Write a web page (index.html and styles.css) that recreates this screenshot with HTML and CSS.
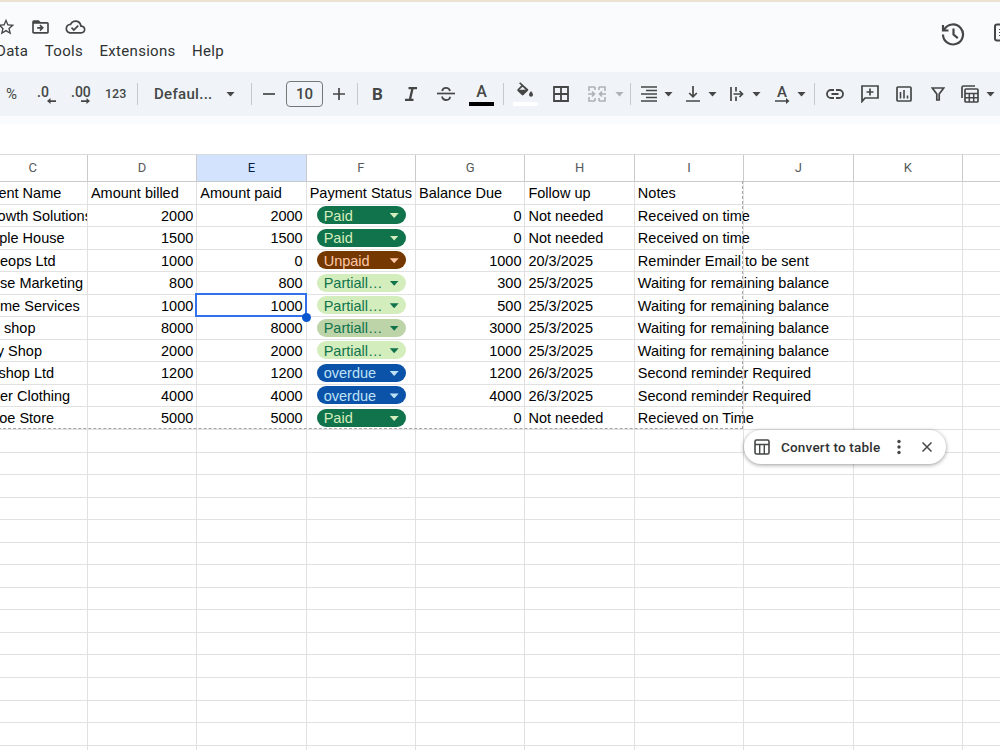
FILE: index.html
```html
<!DOCTYPE html>
<html lang="en">
<head>
  <meta charset="UTF-8">
  <meta name="viewport" content="width=device-width, initial-scale=1.0">
  <title>Payments - Sheet</title>
  <link rel="stylesheet" href="styles.css">
</head>
<body>
  <header class="top">
    <div>
      <div class="doc-icons">
        <svg width="20" height="20" viewBox="0 0 24 24"><path d="M22 9.24l-7.19-.62L12 2 9.19 8.63 2 9.24l5.46 4.73L5.82 21 12 17.27 18.18 21l-1.63-7.03L22 9.24zM12 15.4l-3.76 2.27 1-4.28-3.32-2.88 4.38-.38L12 6.1l1.71 4.04 4.38.38-3.32 2.88 1 4.28L12 15.4z"/></svg>
        <svg width="21" height="20" viewBox="0 0 24 24"><path d="M20 6h-8l-2-2H4a2 2 0 0 0-2 2v12c0 1.1.9 2 2 2h16c1.100 0 2-.9 2-2V8c0-1.100-.9-2-2-2zm0 12H4V8h16v10zm-8-1l4-4-4-4-1.300 1.300L12.200 12H8v2h4.200l-1.500 1.700z"/></svg>
        <svg width="21" height="20" viewBox="0 0 24 24"><path d="M19.350 10.040A7.490 7.490 0 0 0 12 4C9.110 4 6.600 5.640 5.350 8.040A5.994 5.994 0 0 0 0 14c0 3.310 2.690 6 6 6h13c2.760 0 5-2.240 5-5 0-2.640-2.050-4.780-4.650-4.960zM19 18H6c-2.210 0-4-1.790-4-4 0-2.050 1.530-3.760 3.560-3.970l1.070-.110.500-.950A5.469 5.469 0 0 1 12 6c2.620 0 4.880 1.860 5.390 4.430l.300 1.500 1.530.110A2.980 2.980 0 0 1 22 15c0 1.650-1.350 3-3 3zm-9-3.820l-2.090-2.090L6.500 13.500 10 17l6.010-6.010-1.410-1.410z"/></svg>
      </div>
      <nav class="menu">
        <span>Data</span><span>Tools</span><span>Extensions</span><span>Help</span>
      </nav>
    </div>
    <div class="top-actions">
      <svg width="24" height="24" viewBox="0 0 24 24" class="line"><path d="M3.300 7.500A10 10 0 1 1 2 12.500M2 3v5.500h5.500M12.500 6.500v6l4.300 3.600" stroke-width="2.200"/></svg>
      <svg width="20" height="20" viewBox="0 0 20 20" class="line"><rect x="1" y="2.500" width="18" height="16" rx="2" stroke-width="2"/><path d="M5 7.500h9M5 10.500h9M5 13.500h9" stroke-width="1.200"/></svg>
    </div>
  </header>

  <div class="toolbar">
    <span class="tool percent">%</span>
    <span class="tool decimal">.0<svg width="9" height="6" viewBox="0 0 9 6"><path d="M9 2.200H3.500V0L0 3l3.500 3V3.900H9z"/></svg></span>
    <span class="tool decimal">.00<svg width="9" height="6" viewBox="0 0 9 6"><path d="M0 2.200h5.500V0L9 3 5.500 6V3.900H0z"/></svg></span>
    <span class="tool number">123</span>
    <i class="sep"></i>
    <span class="tool font">Defaul...</span>
    <i class="caret"></i>
    <i class="sep s-font"></i>
    <svg class="t-minus line" width="12" height="12" viewBox="0 0 12 12"><path d="M0 6h12" stroke-width="1.700"/></svg>
    <span class="size">10</span>
    <svg class="line" width="12" height="12" viewBox="0 0 12 12"><path d="M0 6h12M6 0v12" stroke-width="1.700"/></svg>
    <i class="sep s-size"></i>
    <b class="tool bold">B</b>
    <svg width="12" height="14" viewBox="0 0 12 14"><path d="M3.500 0v2.200h2.600L3.900 11.800H0V14h8.500v-2.200H6.300L8.500 2.200H12V0z"/></svg>
    <svg class="t-strike line" width="18" height="14" viewBox="0 0 18 14"><path d="M0 6.500h18" stroke-width="1.700"/><path d="M13 4C12.500 1.800 11 .9 9 .9S5.500 2 5.200 4M5 9.500c.5 2.300 2 3.500 4.200 3.500s3.800-1.200 3.800-3.200" stroke-width="1.800"/></svg>
    <span class="tool color">A</span>
    <i class="sep s-color"></i>
    <span class="tool fill"><svg width="17" height="16" viewBox="0 0 17 16"><path d="M3.200.2L2.100 1.300l2.200 2.200L.6 7.200c-.5.5-.5 1.200 0 1.700l4.200 4.200c.5.5 1.200.5 1.700 0l4.600-4.600c.3-.3.300-.9 0-1.200zM5.500 4.700l3.200 3.100H2.300zM14 9s-2 2.300-2 3.700a2 2 0 0 0 4 0C16 11.300 14 9 14 9z"/></svg></span>
    <svg class="line" width="16" height="16" viewBox="0 0 16 16"><path d="M1 1h14v14H1zM8 1v14M1 8h14" stroke-width="1.800"/></svg>
    <svg class="t-merge line" width="18" height="16" viewBox="0 0 18 16"><path d="M7 1H1v4M1 11v4h6M11 1h6v4M17 11v4h-6M7 1v3M7 15v-3M11 1v3M11 15v-3M0 8h6M4 5.500L6.500 8 4 10.500M18 8h-6M14 5.500L11.500 8l2.500 2.500" stroke-width="1.600"/></svg>
    <i class="caret c-merge"></i>
    <i class="sep s-merge"></i>
    <svg class="t-align line" width="16" height="16" viewBox="0 0 16 16"><path d="M0 1h16M5 4.500h11M0 8h16M5 11.500h11M0 15h16" stroke-width="1.700"/></svg>
    <i class="caret"></i>
    <svg class="t-valign line" width="14" height="16" viewBox="0 0 14 16"><path d="M0 15h14M7 0v10M3.200 7L7 10.800 10.800 7" stroke-width="1.700"/></svg>
    <i class="caret"></i>
    <svg class="t-wrap line" width="14" height="14" viewBox="0 0 14 14"><path d="M1 0v14M6 0v4.500M6 9.500V14M3.500 7h9M9.500 4l3 3-3 3" stroke-width="1.700"/></svg>
    <i class="caret"></i>
    <span class="tool rotate">A<svg width="15" height="6" viewBox="0 0 15 6"><path d="M0 2.200h11V0l3.500 3L11 6V3.800H0z"/></svg></span>
    <i class="caret"></i>
    <i class="sep s-rotate"></i>
    <svg class="line" width="18" height="10" viewBox="0 0 18 10"><path d="M8 1H5a4 4 0 0 0 0 8h3M10 1h3a4 4 0 0 1 0 8h-3M5.500 5h7" stroke-width="1.800"/></svg>
    <svg class="t-comment line" width="18" height="18" viewBox="0 0 18 18"><path d="M1 16.500V1h16v12H4zM9 3.500v7M5.500 7h7" stroke-width="1.700"/></svg>
    <svg class="line" width="16" height="16" viewBox="0 0 16 16"><rect x="1" y="1" width="14" height="14" rx="1" stroke-width="1.700"/><path d="M4.500 6v6.500M8 4v8.500M11.500 9.500v3" stroke-width="1.600"/></svg>
    <svg class="t-filter line" width="14" height="14" viewBox="0 0 14 14"><path d="M1.300 1h11.400L8.200 7v6H5.800V7z" stroke-width="1.700"/></svg>
    <svg class="t-views line" width="18" height="18" viewBox="0 0 18 18"><path d="M1 13V2.500Q1 1 2.500 1H14" stroke-width="1.700"/><rect x="4" y="4" width="13" height="13" rx="1" stroke-width="1.700"/><path d="M4 8.500h13M4 12.700h13M8.300 8.500V17M12.700 8.500V17" stroke-width="1.500"/></svg>
    <i class="caret"></i>
  </div>

  <main class="sheet">
    <div class="grid" id="grid"></div>
    <div class="print-area"></div>
    <div class="convert">
      <svg class="line" width="16" height="16" viewBox="0 0 16 16"><rect x="1" y="1" width="14" height="14" rx="1.500" stroke-width="1.600"/><path d="M1 5.500h14M5.700 5.500V15M10.300 5.500V15" stroke-width="1.400"/></svg>
      <span>Convert to table</span>
      <svg class="dots" width="4" height="16" viewBox="0 0 4 16"><circle cx="2" cy="2.500" r="1.700"/><circle cx="2" cy="8" r="1.700"/><circle cx="2" cy="13.500" r="1.700"/></svg>
      <svg class="line" width="10" height="10" viewBox="0 0 10 10"><path d="M.5.5l9 9M9.500.5l-9 9" stroke-width="1.500"/></svg>
    </div>
  </main>

  <script>
    const columns = ["C", "D", "E", "F", "G", "H", "I", "J", "K", ""];
    const ROWS = 26;

    const rows = [
      ["Client Name", "Amount billed", "Amount paid", "Payment Status", "Balance Due", "Follow up", "Notes"],
      ["Growth Solutions", 2000, 2000, "Paid", 0, "Not needed", "Received on time"],
      ["Apple House", 1500, 1500, "Paid", 0, "Not needed", "Received on time"],
      ["Coeops Ltd", 1000, 0, "Unpaid", 1000, "20/3/2025", "Reminder Email to be sent"],
      ["Rose Marketing", 800, 800, "Partiall…", 300, "25/3/2025", "Waiting for remaining balance"],
      ["Home Services", 1000, 1000, "Partiall…", 500, "25/3/2025", "Waiting for remaining balance"],
      ["TV shop", 8000, 8000, "Partiall…", 3000, "25/3/2025", "Waiting for remaining balance"],
      ["Toy Shop", 2000, 2000, "Partiall…", 1000, "25/3/2025", "Waiting for remaining balance"],
      ["Ecshop Ltd", 1200, 1200, "overdue", 1200, "26/3/2025", "Second reminder Required"],
      ["Over Clothing", 4000, 4000, "overdue", 4000, "26/3/2025", "Second reminder Required"],
      ["Shoe Store", 5000, 5000, "Paid", 0, "Not needed", "Recieved on Time"]
    ];

    const chipClass = { "Paid": "paid", "Unpaid": "unpaid", "Partiall…": "partial", "overdue": "overdue" };
    const grid = document.getElementById("grid");

    function addCell(className, text) {
      const cell = document.createElement("div");
      cell.className = className;
      cell.textContent = text;
      grid.appendChild(cell);
      return cell;
    }

    columns.forEach(name => addCell(name === "E" ? "head active" : "head", name));

    for (let r = 0; r < ROWS; r++) {
      columns.forEach((name, c) => {
        const value = rows[r] && rows[r][c] !== undefined ? rows[r][c] : "";
        const cell = addCell("cell", "");
        if (r > 0 && name === "F" && value) {
          const chip = document.createElement("span");
          chip.className = "chip " + chipClass[value] + (r === 6 ? " hovered" : "");
          chip.textContent = value;
          cell.appendChild(chip);
        } else {
          cell.textContent = value;
        }
        if (typeof value === "number") cell.classList.add("num");
        if (name === "C") cell.classList.add("clip");
        if (name === "E" && r === 5) cell.classList.add("selected");
      });
    }
  </script>
</body>
</html>
```

FILE: styles.css
```css
* {
  box-sizing: border-box;
}
body {
  margin: 0;
  width: 1000px;
  height: 750px;
  overflow: hidden;
  background: #f9fbfd;
  color: #444746;
  font-family: Roboto, Arial, sans-serif;
  border-top: 2px solid #eee3d3;
}
svg {
  display: block;
  flex: none;
  fill: #444746;
}
.line {
  fill: none;
  stroke: #444746;
}
.top {
  display: flex;
  justify-content: space-between;
  height: 70px;
}
.doc-icons {
  display: flex;
  gap: 14px;
  margin-left: -4px;
  padding-top: 15px;
}
.menu {
  display: flex;
  gap: 16.5px;
  margin-left: -4px;
  padding-top: 5px;
  font-size: 15px;
  line-height: 19px;
  letter-spacing: 0.3px;
  color: #303232;
}
.top-actions {
  display: flex;
  gap: 29px;
  width: 59px;
  padding-top: 20px;
}

/* toolbar */
.toolbar {
  display: flex;
  align-items: center;
  height: 44px;
  padding-left: 6px;
  background: #f0f4f9;
  font-weight: 500;
}
.tool {
  flex: none;
  line-height: 20px;
}
.percent {
  width: 31px;
  font-size: 15px;
  font-weight: 400;
}
.decimal {
  position: relative;
  width: 34px;
  padding-bottom: 4px;
  font-size: 14px;
}
.decimal svg {
  position: absolute;
  left: 10px;
  top: 16px;
}
.number {
  width: 32px;
  font-size: 12.5px;
}
.sep {
  flex: none;
  width: 1px;
  height: 22px;
  background: #c7cacd;
}
.font {
  width: 72px;
  margin-left: 16px;
  font-size: 15px;
  letter-spacing: 0.3px;
}
.caret {
  flex: none;
  width: 9px;
  height: 5px;
  background: #444746;
  clip-path: polygon(0 0, 100% 0, 50% 100%);
}
.s-font { margin-left: 16px; }
.t-minus { margin-left: 11px; }
.size {
  width: 37px;
  height: 26px;
  margin: 0 10px 0 11px;
  border: 1px solid #747775;
  border-radius: 4px;
  font-size: 15px;
  line-height: 25px;
  text-align: center;
}
.s-size { margin-left: 12px; }
.bold {
  width: 11px;
  margin: 0 22px 0 14px;
  font-size: 17px;
}
.t-strike { margin: 0 14px 0 20px; }
.color {
  width: 25px;
  height: 24px;
  border-bottom: 4px solid #000;
  font-size: 16px;
  text-align: center;
}
.s-color { margin-left: 9px; }
.fill {
  width: 25px;
  height: 24px;
  margin: 0 15px 0 9px;
  padding-left: 4px;
  border-bottom: 4px solid #fff;
}
.t-merge { margin-left: 19px; opacity: 0.38; }
.c-merge { margin-left: 9px; opacity: 0.38; }
.s-merge { margin: 0 10px 0 6px; }
.t-align { margin-right: 7px; }
.t-valign { margin: 0 8px 0 13px; }
.t-wrap { margin: 0 8px 0 13px; }
.rotate {
  position: relative;
  width: 14px;
  height: 24px;
  margin: 0 8px 0 14px;
  font-size: 15px;
  text-align: center;
}
.rotate svg {
  position: absolute;
  left: 0;
  top: 16px;
}
.s-rotate { margin: 0 11px 0 8px; }
.t-comment { margin: 0 17px 0 17px; }
.t-filter { margin: 0 16px 0 19px; }
.t-views { margin-right: 7px; }

/* spreadsheet */
.sheet {
  position: relative;
  height: 626px;
  margin-top: 8px;
  padding-top: 30px;
  overflow: hidden;
  background: #fff;
}
.grid {
  display: grid;
  grid-template-columns: repeat(10, 109.4px);
  grid-template-rows: 27px;
  grid-auto-rows: 22.56px;
  width: 1094px;
  margin-left: -21.5px;
  border-top: 1px solid #d9dadb;
}
.head {
  border-right: 1px solid #c8cacb;
  border-bottom: 1px solid #c8cacb;
  font-size: 13px;
  line-height: 25px;
  text-align: center;
  color: #575a5a;
}
.head.active {
  background: #d3e3fd;
  color: #041e49;
}
.cell {
  position: relative;
  padding: 0 3px;
  border-right: 1px solid #e1e1e1;
  border-bottom: 1px solid #e1e1e1;
  font-family: "Liberation Sans", Arial, sans-serif;
  font-size: 14.5px;
  line-height: 22px;
  white-space: nowrap;
  color: #000;
}
.num {
  text-align: right;
}
.clip {
  overflow: hidden;
}
.selected {
  z-index: 1;
}
.selected::before {
  content: "";
  position: absolute;
  inset: -2px -1px -1px -2px;
  border: 2px solid #3271ea;
}
.selected::after {
  content: "";
  position: absolute;
  right: -5px;
  bottom: -6px;
  width: 9px;
  height: 9px;
  border-radius: 50%;
  background: #0b57d0;
}
.chip {
  display: flex;
  align-items: center;
  justify-content: space-between;
  width: 89px;
  height: 18px;
  margin: 1.5px 0 0 7px;
  padding: 1px 7px 0;
  border-radius: 9px;
}
.chip::after {
  content: "";
  width: 9px;
  height: 5px;
  background: currentColor;
  clip-path: polygon(0 0, 100% 0, 50% 100%);
}
.paid { background: #11734b; color: #d4edbc; }
.unpaid { background: #753800; color: #ffc8aa; }
.partial { background: #d4edbc; color: #11734b; }
.overdue { background: #0a53a8; color: #bfe1f6; }
.hovered { background: #bdd4a8; }

/* dashed outline of the suggested table */
.print-area {
  position: absolute;
  left: -22px;
  top: 57px;
  width: 765px;
  height: 248px;
  border-right: 1px dashed #a5a5a5;
  border-bottom: 1px dashed #a5a5a5;
}
.convert {
  position: absolute;
  z-index: 2;
  left: 744px;
  top: 306px;
  display: flex;
  align-items: center;
  width: 202px;
  height: 34px;
  padding-left: 10px;
  border-radius: 17px;
  background: #fff;
  box-shadow: 0 1px 4px rgba(0, 0, 0, 0.4);
  font-size: 13.5px;
  font-weight: 500;
  letter-spacing: 0.2px;
  color: #303232;
}
.convert span {
  width: 106px;
  margin-left: 11px;
  white-space: nowrap;
}
.convert .dots {
  margin: 0 21px 0 10px;
}
```
